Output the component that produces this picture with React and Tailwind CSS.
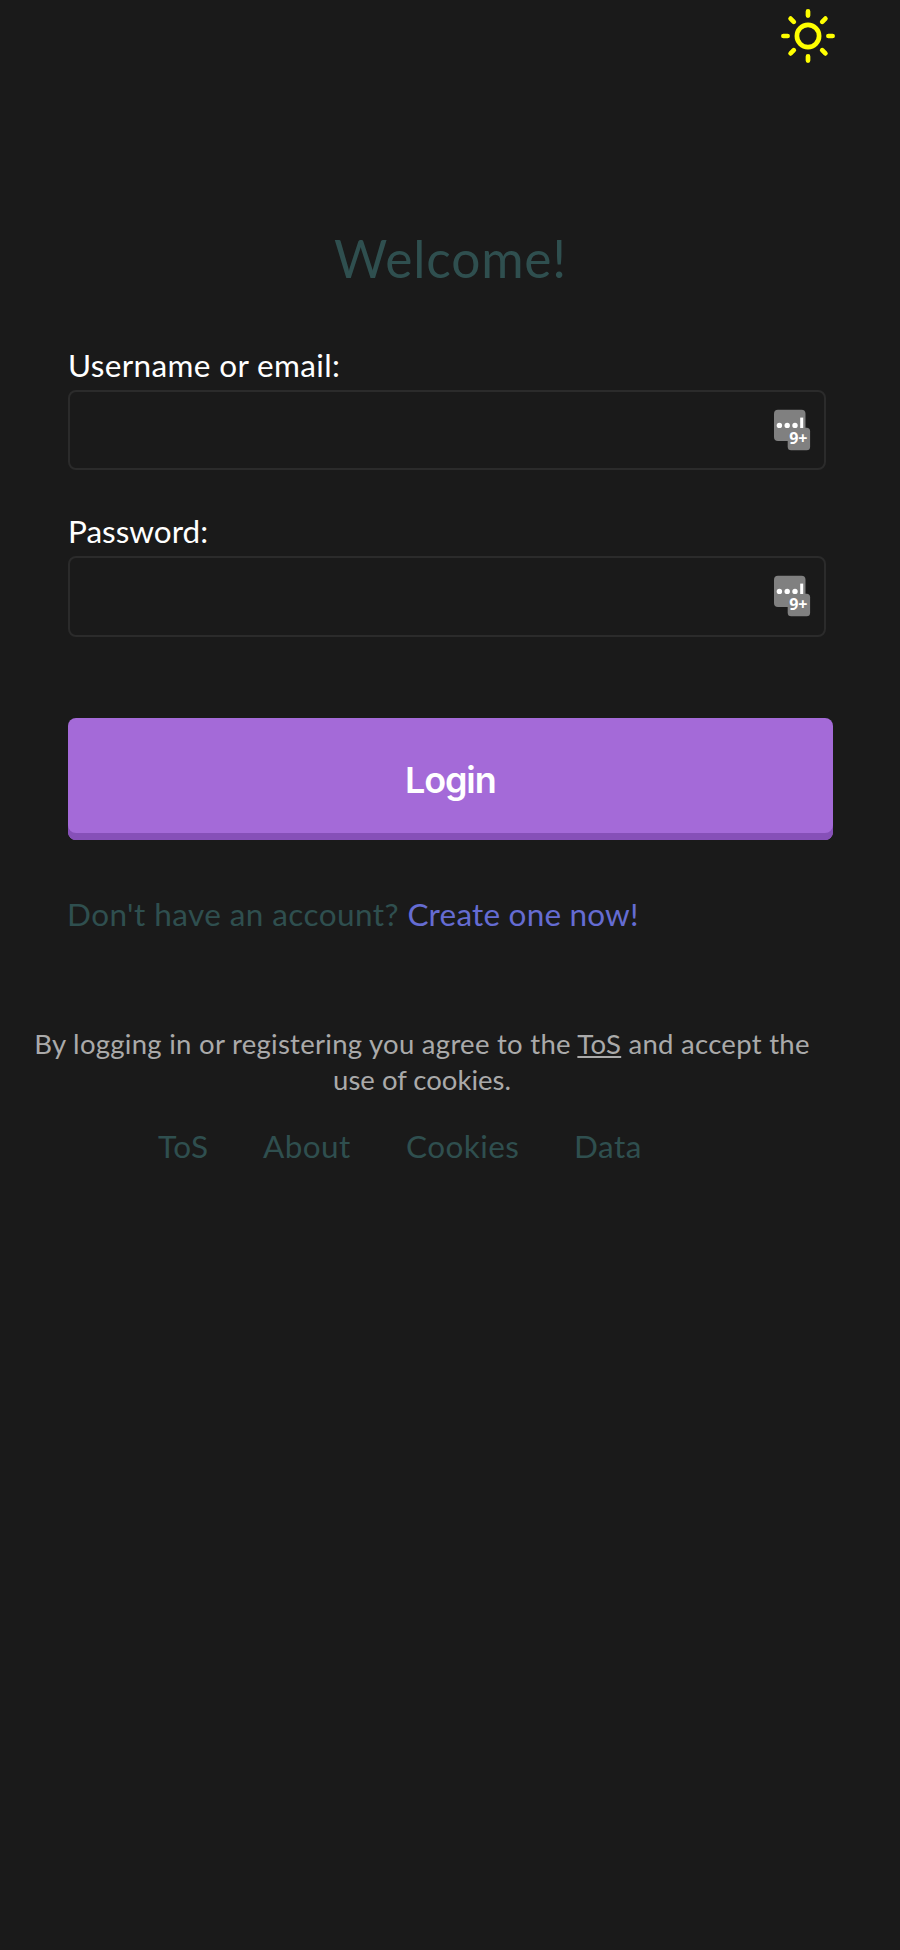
function SunIcon() {
  return (
    <svg className="h-[56px] w-[56px]" viewBox="-28 -28 56 56" fill="none" stroke="#ffff00" strokeWidth="4.7" strokeLinecap="round">
      <circle r="11.1" />
      <path d="M0-24.6V-20.4M0 20.4V24.6M-24.6 0H-20.4M20.4 0H24.6M-17.4-17.4L-14.2-14.2M17.4-17.4L14.2-14.2M-17.4 17.4L-14.2 14.2M17.4 17.4L14.2 14.2" />
    </svg>
  );
}

function PasswordManagerIcon() {
  return (
    <svg className="h-[42px] w-[37px]" viewBox="0 0 37 42">
      <rect x="0" y="0.8" width="31.5" height="31.2" rx="4" fill="#808080" />
      <rect x="13.7" y="18.8" width="22.4" height="22.4" rx="3.5" fill="#808080" />
      <g fill="#fff">
        <circle cx="5.4" cy="16.4" r="2.7" />
        <circle cx="13.2" cy="16.4" r="2.7" />
        <circle cx="21" cy="16.4" r="2.7" />
        <rect x="26.2" y="8.6" width="3" height="10.4" />
        <text x="15.2" y="34.8" fontFamily="Open Sans, sans-serif" fontWeight="700" fontSize="16">9+</text>
      </g>
    </svg>
  );
}

function Field({ label, type, labelClass }) {
  return (
    <label className="flex flex-col">
      <span className={`h-10 whitespace-nowrap pt-px text-[31.5px] leading-10 text-white ${labelClass}`}>{label}</span>
      <span className="mt-[5.7px] flex h-[80.6px] w-[758px] items-center rounded-[8px] border-2 border-[#2b2b2b] pr-[13px]">
        <input type={type} className="h-full min-w-0 flex-1 bg-transparent px-4 text-[30px] text-white outline-none" />
        <PasswordManagerIcon />
      </span>
    </label>
  );
}

export default function App() {
  return (
    <div className="flex h-[1950px] w-[900px] flex-col overflow-hidden bg-[#1a1a1a] font-['Lato',sans-serif] text-[#2f4f4f]">
      <header className="flex h-[228px] justify-end pt-2 pr-[64.5px]">
        <SunIcon />
      </header>
      <main className="flex flex-col pr-[67px] pl-[68px]">
        <h1 className="text-center text-[51.5px] leading-[60px] tracking-[0.8px]">Welcome!</h1>
        <form className="mt-[56px] flex flex-col">
          <Field label="Username or email:" type="text" labelClass="tracking-[0.36px]" />
          <div className="h-[40px]" />
          <Field label="Password:" type="password" labelClass="tracking-[0px]" />
          <button type="button" className="mt-[81.4px] -ml-[0.5px] h-[122px] w-[765.5px] rounded-[8px] bg-[#a46ad8] pt-[2px] font-['Inter',sans-serif] text-[36px] font-semibold tracking-[-1.1px] text-white shadow-[inset_0_-7px_0_#8650b8]">
            Login
          </button>
        </form>
        <p className="mt-[54px] -ml-px whitespace-nowrap text-[31.5px] leading-10">
          <span className="tracking-[0.42px]">Don't have an account? </span>
          <a className="tracking-[0.2px] text-[#656cd2]">Create one now!</a>
        </p>
      </main>
      <footer className="mt-[92px] flex flex-col">
        <p className="w-[844px] text-center text-[27.5px] leading-9 text-[#aaaaaa]">
          <span className="whitespace-nowrap tracking-[0.28px]">
            By logging in or registering you agree to the <a className="underline">ToS</a> and accept the
          </span>
          <br />
          <span>use of cookies.</span>
        </p>
        <nav className="mt-[28px] flex pl-[158px] text-[31.5px] leading-10 tracking-[0.45px]">
          <a className="w-[105px]">ToS</a>
          <a className="w-[143px]">About</a>
          <a className="w-[168px]">Cookies</a>
          <a>Data</a>
        </nav>
      </footer>
    </div>
  );
}
